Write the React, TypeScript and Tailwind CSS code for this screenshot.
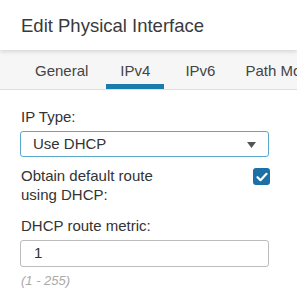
const TABS = ['General', 'IPv4', 'IPv6', 'Path Monitoring']

export default function App() {
  return (
    <div className="w-[297px] h-[301px] overflow-hidden bg-white text-[#333] font-['Liberation_Sans',Arial,sans-serif]">
      <div className="h-[50px] pl-[21px] pt-[15px] text-[18.5px] leading-[22px] text-[#3a3a3a] relative z-10 shadow-[0_2px_4px_rgba(0,0,0,0.12)]">
        Edit Physical Interface
      </div>

      {/* tabs */}
      <div className="h-[40px] bg-[#f6f6f6] border-b border-[#dedede] flex whitespace-nowrap">
        <div className="flex pl-[20px]">
          {TABS.map((t) => (
            <div
              key={t}
              className={
                'relative pt-[12px] text-[15px] leading-[18px] text-[#444] ' +
                (t === 'IPv4' ? 'w-[58px] text-center ml-[3px] mr-[6px]' : 'px-[15px]')
              }
            >
              {t}
              {t === 'IPv4' && <div className="absolute left-0 right-0 bottom-0 h-[5px] bg-[#1a7cad]" />}
            </div>
          ))}
        </div>
      </div>

      <div className="px-[20px] pt-[18px]">
        <div className="text-[15px] leading-[18px] pl-px">IP Type:</div>
        <div className="mt-[5px] h-[26px] w-[249px] border border-[#5aa7c9] rounded-[3px] flex items-center justify-between pl-[12px] pr-[12px] text-[15px]">
          <span>Use DHCP</span>
          <svg width="9" height="6" viewBox="0 0 9 6" className="mt-px">
            <path d="M0 0h9L4.5 6z" fill="#555" />
          </svg>
        </div>

        <div className="mt-[9px] flex justify-between w-[249px]">
          <div className="text-[15px] leading-[19px] pl-px">
            Obtain default route
            <br />
            using DHCP:
          </div>
          <div className="mt-[2px] mr-[-1px] w-[17px] h-[17px] rounded-[3px] bg-[#1d70a6] flex items-center justify-center">
            <svg width="12" height="10" viewBox="0 0 12 10">
              <path d="M1.5 5.2l3 3L10.5 1.8" fill="none" stroke="white" strokeWidth="2.2" strokeLinecap="round" strokeLinejoin="round" />
            </svg>
          </div>
        </div>

        <div className="mt-[13px] text-[15px] leading-[18px] pl-px">DHCP route metric:</div>
        <div className="mt-[5px] h-[27px] w-[249px] border border-[#bcbcbc] rounded-[3px] flex items-center pl-[13px] text-[15px]">
          1
        </div>
        <div className="mt-[4px] text-[13px] italic text-[#aaa] pl-px">(1 - 255)</div>
      </div>
    </div>
  )
}
